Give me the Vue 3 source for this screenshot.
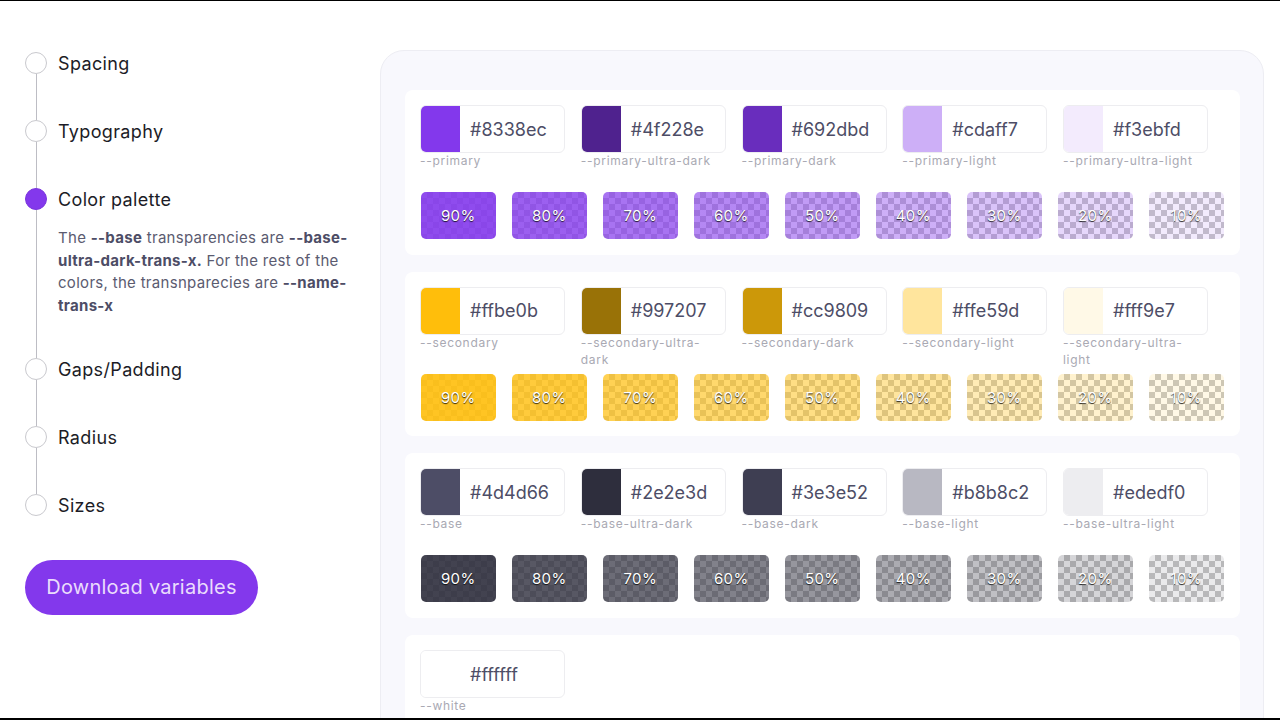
<template>
  <div class="page">
    <aside class="sidebar">
      <ul class="steps">
        <li v-for="step in steps" :key="step.name" class="step" :class="{ active: step.active }">
          <div class="step-head">
            <span class="dot"></span>
            <span class="step-name">{{ step.name }}</span>
          </div>
          <p v-if="step.active" class="desc">
            The <b>--base</b> transparencies are <b>--base-ultra-dark-trans-x.</b> For the rest of the colors, the transnparecies are <b>--name-trans-x</b>
          </p>
        </li>
      </ul>
      <button class="download">Download variables</button>
    </aside>

    <main class="panel">
      <section v-for="group in groups" :key="group.name" class="card">
        <div class="chips">
          <div v-for="chip in group.chips" :key="chip.label" class="chip">
            <div class="chip-box">
              <span class="chip-color" :style="{ backgroundColor: chip.hex }"></span>
              <span class="chip-hex">{{ chip.hex }}</span>
            </div>
            <div class="chip-label">{{ chip.label }}</div>
          </div>
        </div>
        <div v-if="group.trans" class="tiles">
          <div v-for="p in percents" :key="p" class="tile" :style="{ '--tint': tint(group.trans, p) }">{{ p }}%</div>
        </div>
      </section>
    </main>
  </div>
</template>

<script setup>
const steps = [
  { name: 'Spacing' },
  { name: 'Typography' },
  { name: 'Color palette', active: true },
  { name: 'Gaps/Padding' },
  { name: 'Radius' },
  { name: 'Sizes' }
];

const percents = [90, 80, 70, 60, 50, 40, 30, 20, 10];

// 颜色分组
const groups = [
  {
    name: 'primary',
    trans: '131, 56, 236',
    chips: [
      { hex: '#8338ec', label: '--primary' },
      { hex: '#4f228e', label: '--primary-ultra-dark' },
      { hex: '#692dbd', label: '--primary-dark' },
      { hex: '#cdaff7', label: '--primary-light' },
      { hex: '#f3ebfd', label: '--primary-ultra-light' }
    ]
  },
  {
    name: 'secondary',
    trans: '255, 190, 11',
    chips: [
      { hex: '#ffbe0b', label: '--secondary' },
      { hex: '#997207', label: '--secondary-ultra-dark' },
      { hex: '#cc9809', label: '--secondary-dark' },
      { hex: '#ffe59d', label: '--secondary-light' },
      { hex: '#fff9e7', label: '--secondary-ultra-light' }
    ]
  },
  {
    name: 'base',
    trans: '46, 46, 61',
    chips: [
      { hex: '#4d4d66', label: '--base' },
      { hex: '#2e2e3d', label: '--base-ultra-dark' },
      { hex: '#3e3e52', label: '--base-dark' },
      { hex: '#b8b8c2', label: '--base-light' },
      { hex: '#ededf0', label: '--base-ultra-light' }
    ]
  },
  {
    name: 'white',
    chips: [{ hex: '#ffffff', label: '--white' }]
  }
];

const tint = (rgb, p) => `rgba(${rgb}, ${p / 100})`;
</script>

<style scoped>
.page {
  box-sizing: border-box;
  width: 1280px;
  height: 720px;
  display: flex;
  overflow: hidden;
  background: #fff;
  border-top: 1px solid #000;
  border-bottom: 2px solid #000;
  font-family: Inter, "Liberation Sans", sans-serif;
  color: #1c1c26;
}

.sidebar {
  flex: 0 0 380px;
  box-sizing: border-box;
  padding: 51px 26px 0 25px;
}

.steps {
  list-style: none;
  margin: 0;
  padding: 0;
}

.step {
  position: relative;
  padding-bottom: 46px;
}

.step:last-child {
  padding-bottom: 44px;
}

/* 连接线 */
.step:not(:last-child)::before {
  content: '';
  position: absolute;
  left: 11px;
  top: 22px;
  bottom: 0;
  width: 1px;
  background: #bdbdc4;
}

.step-head {
  display: flex;
  align-items: center;
  gap: 11px;
  height: 22px;
}

.dot {
  box-sizing: border-box;
  width: 22px;
  height: 22px;
  border-radius: 50%;
  background: #fff;
  border: 1px solid #c9c9ce;
}

.active .dot {
  background: #8338ec;
  border-color: #7a35dd;
}

.step-name {
  font-size: 18px;
  letter-spacing: 0.35px;
}

.desc {
  margin: 17px 0 -5px 33px;
  font-size: 15px;
  line-height: 22.6px;
  letter-spacing: 0.3px;
  color: #5b5b70;
}

.desc b {
  color: #4d4d66;
  font-weight: 700;
}

.download {
  display: block;
  width: 233px;
  height: 55px;
  padding-bottom: 2px;
  border: 0;
  border-radius: 28px;
  background: #8338ec;
  color: #eadcfc;
  font: 400 20px Inter, "Liberation Sans", sans-serif;
  letter-spacing: 0.25px;
}

.panel {
  flex: 1;
  box-sizing: border-box;
  height: 760px;
  margin: 49px 16px 0 0;
  padding: 39px 23px 0 24px;
  display: flex;
  flex-direction: column;
  gap: 17px;
  background: #f8f8fd;
  border: 1px solid #ededf3;
  border-radius: 24px;
}

.card {
  flex: 0 0 164.7px;
  box-sizing: border-box;
  padding: 15px;
  background: #fff;
  border-radius: 8px;
}

.chips {
  display: flex;
  gap: 15.75px;
}

.chip {
  width: 145px;
  height: 87px;
}

.chip-box {
  box-sizing: border-box;
  display: flex;
  align-items: center;
  height: 48px;
  border: 1px solid #ededf0;
  border-radius: 6px;
  overflow: hidden;
}

.chip-color {
  align-self: stretch;
  flex: 0 0 39px;
}

.chip-hex {
  margin-left: 10px;
  font-size: 18px;
  color: #4d4d66;
}

.chip-label {
  margin-top: -1px;
  font-size: 12px;
  line-height: 17.5px;
  letter-spacing: 0.7px;
  color: #a9a9b3;
}

.tiles {
  display: flex;
  gap: 16.5px;
  padding-left: 1px;
}

.tile {
  width: 74.5px;
  height: 47px;
  display: flex;
  align-items: center;
  justify-content: center;
  border-radius: 5px;
  background-image:
    linear-gradient(var(--tint), var(--tint)),
    conic-gradient(#c8c8c8 25%, #fff 0 50%, #c8c8c8 0 75%, #fff 0);
  background-size: auto, 12px 12px;
  color: #fff;
  font-size: 15px;
  letter-spacing: 0.4px;
  text-shadow: 0 1px 1px rgba(0, 0, 0, 0.8);
}
</style>

<style>
body {
  margin: 0;
}
</style>
